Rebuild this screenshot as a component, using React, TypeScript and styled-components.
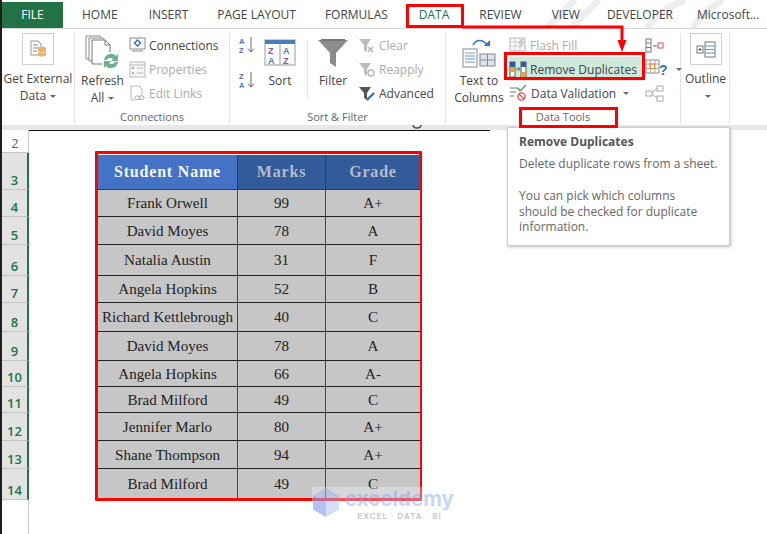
import styled, { createGlobalStyle } from "styled-components";

const GlobalStyle = createGlobalStyle`
  html, body {
    margin: 0;
    padding: 0;
    background: #fff;
  }
  body {
    font-family: "Open Sans", "Noto Sans", sans-serif;
  }
`;

const Page = styled.div`
  position: relative;
  width: 767px;
  height: 534px;
  overflow: hidden;
  background: #fff;
  border-left: 2px solid #1d1d1d;
  box-sizing: border-box;
`;

const TabBar = styled.div`
  position: relative;
  display: flex;
  align-items: flex-end;
  gap: 30px;
  height: 29px;
  box-sizing: border-box;
  border-bottom: 1px solid #d6d6d6;
`;

const FileTab = styled.div`
  width: 61px;
  height: 26px;
  margin-right: -11px;
  background: #217346;
  color: #fff;
  font-size: 12px;
  line-height: 26px;
  text-align: center;
`;

const Tab = styled.div<{ $active?: boolean; $nudge?: number }>`
  position: relative;
  height: 26px;
  margin-left: ${(p) => p.$nudge ?? 0}px;
  font-size: 12px;
  line-height: 26px;
  white-space: nowrap;
  color: ${(p) => (p.$active ? "#217346" : "#444")};
`;

const BackdropArt = styled.svg`
  position: absolute;
  right: 0;
  top: 0;
`;

const Ribbon = styled.div`
  display: flex;
  height: 96px;
  box-sizing: border-box;
  padding: 4px 0 1px;
`;

const Group = styled.div<{ $w: number }>`
  display: flex;
  flex-direction: column;
  width: ${(p) => p.$w}px;
  box-sizing: border-box;
  border-right: 1px solid #e3e3e3;
`;

const GroupBody = styled.div<{ $inset?: number }>`
  flex: 1;
  display: flex;
  min-height: 0;
  padding-left: ${(p) => p.$inset ?? 0}px;
`;

const GroupLabel = styled.div`
  height: 14px;
  font-size: 11px;
  line-height: 14px;
  text-align: center;
  color: #666;
`;

const BigButton = styled.div<{ $w: number }>`
  display: flex;
  flex-direction: column;
  align-items: center;
  flex: none;
  width: ${(p) => p.$w}px;
  font-size: 12px;
  line-height: 17px;
  color: #444;
  text-align: center;
`;

const IconSlot = styled.div`
  display: flex;
  align-items: center;
  justify-content: center;
  height: 39px;
`;

const BoxedIcon = styled.div`
  display: flex;
  align-items: center;
  justify-content: center;
  width: 30px;
  height: 30px;
  margin-bottom: 5px;
  border: 1px solid #cfcfcf;
`;

const Caret = styled.span`
  display: inline-block;
  width: 0;
  height: 0;
  margin-left: 4px;
  vertical-align: 2px;
  border-left: 3px solid transparent;
  border-right: 3px solid transparent;
  border-top: 3px solid #666;
`;

const SmallColumn = styled.div<{ $inset?: number }>`
  display: flex;
  flex-direction: column;
  margin-left: ${(p) => p.$inset ?? 0}px;
`;

const SmallRow = styled.div<{ $muted?: boolean; $hot?: boolean }>`
  display: flex;
  align-items: center;
  gap: 3px;
  height: 24px;
  padding-right: 8px;
  font-size: 12px;
  white-space: nowrap;
  color: ${(p) => (p.$muted ? "#ababab" : "#444")};
  background: ${(p) => (p.$hot ? "#cfe9dc" : "transparent")};
`;

const VerticalRule = styled.div`
  width: 1px;
  height: 58px;
  margin: 7px 9px 0 4px;
  background: #e3e3e3;
`;

const SortColumn = styled.div`
  display: flex;
  flex-direction: column;
  gap: 17px;
  padding: 3px 0 0 9px;
`;

const Band = styled.div`
  height: 5px;
  background: #e8e8e8;
`;

const Sheet = styled.div`
  display: flex;
  height: 404px;
`;

const RowHeaders = styled.div`
  flex: none;
  width: 27px;
  box-sizing: border-box;
  border-right: 1px solid #c8c8c8;
`;

const RowHeader = styled.div<{ $h: number; $plain?: boolean }>`
  display: flex;
  align-items: flex-end;
  justify-content: center;
  height: ${(p) => p.$h}px;
  box-sizing: border-box;
  margin-right: -1px;
  font-size: 13px;
  font-weight: ${(p) => (p.$plain ? 400 : 600)};
  color: ${(p) => (p.$plain ? "#666" : "#217346")};
  background: ${(p) => (p.$plain ? "#fff" : "#e2e2e2")};
  border-bottom: 1px solid #c4c4c4;
  border-right: ${(p) => (p.$plain ? "1px solid #c8c8c8" : "2px solid #217346")};
`;

const Canvas = styled.div`
  flex: 1;
  border-top: 1px solid #111;
  margin-right: 277px;
  padding: 20px 0 0 66px;
`;

const TableFrame = styled.div`
  width: 327px;
  box-sizing: border-box;
  border: 3px solid #f00;
  padding-top: 1px;
  border-radius: 1px;
`;

const Grid = styled.div`
  display: grid;
  grid-template-columns: 140px 88px 94px;
  font-family: "Liberation Serif", serif;
`;

const HeadCell = styled.div<{ $bright?: boolean; $tone: string }>`
  display: flex;
  align-items: center;
  justify-content: center;
  height: 35px;
  box-sizing: border-box;
  font-size: 16px;
  font-weight: 700;
  letter-spacing: 0.8px;
  color: ${(p) => (p.$bright ? "#f4f6fb" : "#b4bccb")};
  background: ${(p) => p.$tone};
  border-right: 1px solid #24406e;
  border-bottom: 1px solid #24406e;
  &:nth-child(3) {
    border-right: 0;
  }
`;

const Cell = styled.div<{ $h: number; $last?: boolean }>`
  display: flex;
  align-items: center;
  justify-content: center;
  height: ${(p) => p.$h}px;
  box-sizing: border-box;
  padding-top: 1px;
  font-size: 15.1px;
  white-space: nowrap;
  color: #222;
  background: #c6c6c6;
  border-bottom: ${(p) => (p.$last ? "0" : "1px solid #222")};
  border-right: 1px solid #444;
  &:nth-child(3n) {
    border-right: 0;
  }
`;

const Tooltip = styled.div`
  position: absolute;
  left: 505px;
  top: 127px;
  width: 223px;
  height: 119px;
  box-sizing: border-box;
  padding: 6px 2px 5px 11px;
  background: #fff;
  border: 1px solid #cdcdcd;
  box-shadow: 1px 1px 3px rgba(0, 0, 0, 0.25);
  font-size: 12px;
  line-height: 15.5px;
  color: #666;
  white-space: nowrap;
`;

const TooltipTitle = styled.div`
  margin-bottom: 6.5px;
  font-weight: 700;
  color: #555;
`;

const TooltipText = styled.div`
  margin-bottom: 16.5px;
`;

const RedBox = styled.div<{ $x: number; $y: number; $w: number; $h: number }>`
  position: absolute;
  left: ${(p) => p.$x}px;
  top: ${(p) => p.$y}px;
  width: ${(p) => p.$w}px;
  height: ${(p) => p.$h}px;
  box-sizing: border-box;
  border: 3px solid #f00;
`;

const Arrow = styled.svg`
  position: absolute;
  left: 460px;
  top: 24px;
`;

const CutOffGlyph = styled.svg`
  position: absolute;
  left: 409px;
  top: 124px;
`;

const Watermark = styled.div`
  position: absolute;
  left: 310px;
  top: 487px;
  display: flex;
  gap: 5px;
  background: rgba(255, 255, 255, 0.3);
`;

const WatermarkWords = styled.div`
  display: flex;
  flex-direction: column;
  align-items: center;
`;

const WatermarkName = styled.div`
  font-family: "Inter", sans-serif;
  font-size: 20.5px;
  font-weight: 700;
  line-height: 24px;
  color: rgba(120, 150, 235, 0.42);
`;

const WatermarkTag = styled.div`
  font-family: "Inter", sans-serif;
  font-size: 8px;
  font-weight: 700;
  letter-spacing: 1px;
  line-height: 11px;
  color: rgba(120, 120, 120, 0.42);
`;

const DocIcon = () => (
  <svg width="18" height="18" viewBox="0 0 18 18">
    <path d="M2 1h7l3 3v11H2z" fill="#fff" stroke="#999" />
    <path d="M4 5h5M4 8h6M4 11h4" stroke="#888" />
    <ellipse cx="13" cy="8" rx="4" ry="1.6" fill="#e9b46a" />
    <path d="M9 8v7c0 2 8 2 8 0V8z" fill="#e9b46a" />
    <path d="M9 11c0 2 8 2 8 0" stroke="#fff" fill="none" strokeWidth=".6" />
  </svg>
);

const RefreshIcon = () => (
  <svg width="36" height="36" viewBox="0 0 36 36">
    <path d="M1 1h14l1 1v22H1z" fill="#fff" stroke="#8a8a8a" />
    <path d="M4 3h14l1 1v22H4z" fill="#fff" stroke="#8a8a8a" />
    <path d="M7 5h13l5 5v19H7z" fill="#fff" stroke="#777" />
    <path d="M20 5v5h5" fill="none" stroke="#777" />
    <circle cx="26" cy="26" r="9" fill="#fff" />
    <path d="M19 25a7 7 0 0 1 12-4l2-2v7h-7l2-2a4 4 0 0 0-6 1z" fill="#6db28c" />
    <path d="M33 27a7 7 0 0 1-12 4l-2 2v-7h7l-2 2a4 4 0 0 0 6-1z" fill="#6db28c" />
  </svg>
);

const ConnectionsIcon = () => (
  <svg width="17" height="16" viewBox="0 0 17 16">
    <rect x="1" y="1" width="15" height="11" fill="#fff" stroke="#888" />
    <path d="M3 14h11" stroke="#888" />
    <path d="M8.5 3l3 3-3 3-3-3z" fill="none" stroke="#2f75b5" strokeWidth="1.4" />
  </svg>
);

const PropertiesIcon = () => (
  <svg width="17" height="17" viewBox="0 0 17 17">
    <rect x="1" y="1" width="15" height="15" fill="#f5f5f5" stroke="#bbb" />
    <path d="M1 4h15" stroke="#bbb" />
    <rect x="3" y="6" width="2" height="2" fill="#aaa" />
    <rect x="3" y="11" width="2" height="2" fill="#aaa" />
    <path d="M8 7h6M8 12h6" stroke="#bbb" />
  </svg>
);

const LinksIcon = () => (
  <svg width="17" height="17" viewBox="0 0 17 17">
    <path d="M2 1h8l3 3v7M2 1v14h4" fill="#fff" stroke="#bbb" />
    <rect x="6" y="11" width="5" height="3.5" rx="1.7" fill="none" stroke="#aaa" />
    <rect x="10" y="11" width="5" height="3.5" rx="1.7" fill="none" stroke="#aaa" />
  </svg>
);

const SortAZ = ({ flip }: { flip?: boolean }) => (
  <svg width="18" height="18" viewBox="0 0 18 18">
    <text x="0" y="8" fontFamily="Liberation Sans" fontSize="7.5" fontWeight="700" fill={flip ? "#7a5ab0" : "#3f80c4"}>
      {flip ? "Z" : "A"}
    </text>
    <text x="0" y="17" fontFamily="Liberation Sans" fontSize="7.5" fontWeight="700" fill={flip ? "#3f80c4" : "#7a5ab0"}>
      {flip ? "A" : "Z"}
    </text>
    <path d="M12 1v15M9 12.5l3 3.5 3-3.5" fill="none" stroke="#666" />
  </svg>
);

const SortIcon = () => (
  <svg width="32" height="27" viewBox="0 0 32 27">
    <rect x="1" y="1" width="30" height="25" fill="#fff" stroke="#999" />
    <rect x="1" y="1" width="30" height="4" fill="#4a7ebb" />
    <path d="M16 5v21" stroke="#999" />
    <text x="4" y="15" fontFamily="Liberation Sans" fontSize="9" fontWeight="700" fill="#7a5ab0">Z</text>
    <text x="4" y="25" fontFamily="Liberation Sans" fontSize="9" fontWeight="700" fill="#3f80c4">A</text>
    <text x="19" y="15" fontFamily="Liberation Sans" fontSize="9" fontWeight="700" fill="#3f80c4">A</text>
    <text x="19" y="25" fontFamily="Liberation Sans" fontSize="9" fontWeight="700" fill="#7a5ab0">Z</text>
  </svg>
);

const FilterIcon = () => (
  <svg width="30" height="28" viewBox="0 0 30 28">
    <path d="M0 1h30L18 14v14l-6-4V14z" fill="#8c8c8c" />
    <path d="M3 1h24" stroke="#777" strokeWidth="2" />
  </svg>
);

const SmallFilter = ({ kind }: { kind: "clear" | "reapply" | "advanced" }) => (
  <svg width="18" height="17" viewBox="0 0 18 17">
    <path
      d="M1 2h12L9 8v7l-3-2V8z"
      fill={kind === "advanced" ? "#555" : "#bdbdbd"}
    />
    {kind === "clear" && <path d="M10 10l5 5M15 10l-5 5" stroke="#b5b5b5" strokeWidth="1.5" />}
    {kind === "reapply" && <circle cx="13" cy="12" r="3" fill="none" stroke="#b5b5b5" strokeWidth="1.4" />}
    {kind === "advanced" && <path d="M9 15l7-7" stroke="#2f75b5" strokeWidth="2.4" />}
  </svg>
);

const TextColumnsIcon = () => (
  <svg width="34" height="30" viewBox="0 0 34 30">
    <rect x="1" y="11" width="14" height="18" fill="#fff" stroke="#888" />
    <path d="M3 15h10M3 18h10M3 21h10M3 24h10" stroke="#5b9bd5" />
    <rect x="18" y="16" width="15" height="12" fill="#dce6f1" stroke="#888" />
    <path d="M25.5 16v12M18 22h15" stroke="#888" />
    <path d="M11 7c3-6 10-6 14 0" fill="none" stroke="#2f75b5" strokeWidth="1.6" />
    <path d="M22 8h6V2z" fill="#2f75b5" />
  </svg>
);

const FlashFillIcon = () => (
  <svg width="18" height="16" viewBox="0 0 18 16">
    <rect x="1" y="1" width="15" height="13" fill="#fafafa" stroke="#bbb" />
    <path d="M1 5h15M1 9h15M6 1v13M11 1v13" stroke="#ccc" />
    <path d="M12 2l-3 5h3l-2 5 6-7h-3l2-3z" fill="#c9c9c9" />
  </svg>
);

const DuplicatesIcon = () => (
  <svg width="18" height="17" viewBox="0 0 18 17">
    <rect x="1" y="1" width="5" height="15" fill="#fff" stroke="#5a5a5a" />
    <rect x="1" y="1" width="5" height="5" fill="#2f5d9b" />
    <rect x="1" y="6" width="5" height="5" fill="#e6a23c" />
    <rect x="12" y="1" width="5" height="15" fill="#fff" stroke="#5a5a5a" />
    <rect x="12" y="1" width="5" height="5" fill="#2f5d9b" />
    <rect x="12" y="11" width="5" height="5" fill="#e6a23c" />
    <path d="M7 8h3M9 6l2 2-2 2" fill="none" stroke="#2f75b5" />
  </svg>
);

const ValidationIcon = () => (
  <svg width="19" height="18" viewBox="0 0 19 18">
    <path d="M1 4h8M1 8h6M1 12h4" stroke="#777" />
    <path d="M9 4l2 3 6-6" fill="none" stroke="#4c9a6a" strokeWidth="1.4" />
    <circle cx="12.5" cy="12.5" r="3.6" fill="#fff" stroke="#d9534f" strokeWidth="1.4" />
    <path d="M10 10l5 5" stroke="#d9534f" strokeWidth="1.3" />
  </svg>
);

const ConsolidateIcon = () => (
  <svg width="20" height="15" viewBox="0 0 20 15">
    <rect x="1" y="1" width="5" height="13" fill="#fff" stroke="#777" />
    <path d="M1 5h5M1 9.500h5" stroke="#777" />
    <path d="M8 8h4" stroke="#2f75b5" />
    <rect x="13" y="5" width="5" height="5" fill="#fff" stroke="#d9534f" />
  </svg>
);

const WhatIfIcon = () => (
  <svg width="24" height="21" viewBox="0 0 24 21">
    <rect x="1" y="1" width="13" height="13" fill="#fff" stroke="#888" />
    <path d="M1 5h13M1 9.500h13M5.500 1v13M10 1v13" stroke="#aaa" />
    <rect x="5" y="5" width="4.500" height="4.500" fill="none" stroke="#e08a2e" />
    <text x="14" y="16" fontFamily="Liberation Sans" fontSize="14" fontWeight="700" fill="#2f75b5">?</text>
  </svg>
);

const RelationshipIcon = () => (
  <svg width="20" height="17" viewBox="0 0 20 17">
    <rect x="1" y="6" width="6" height="5" fill="#fff" stroke="#aaa" />
    <rect x="12" y="1" width="6" height="5" fill="#fff" stroke="#aaa" />
    <rect x="12" y="11" width="6" height="5" fill="#fff" stroke="#aaa" />
    <path d="M7 8l5-5M7 9l5 4" stroke="#aaa" />
  </svg>
);

const OutlineIcon = () => (
  <svg width="20" height="17" viewBox="0 0 20 17">
    <rect x="1" y="5" width="6" height="7" fill="#fff" stroke="#777" />
    <path d="M2.500 8.500h3M4 7v3" stroke="#555" />
    <rect x="9" y="1" width="10" height="15" fill="#fff" stroke="#777" />
    <path d="M9 5h10M9 8.500h10M9 12h10" stroke="#5b9bd5" />
  </svg>
);

const TABS = [
  { label: "HOME" },
  { label: "INSERT", nudge: 1 },
  { label: "PAGE LAYOUT", nudge: -1 },
  { label: "FORMULAS", nudge: -1 },
  { label: "DATA", nudge: 1 },
  { label: "REVIEW" },
  { label: "VIEW" },
  { label: "DEVELOPER", nudge: -3 },
  { label: "Microsoft...", nudge: -6 },
];

const ROW_HEADS = [
  { n: 2, h: 23 },
  { n: 3, h: 37 },
  { n: 4, h: 27 },
  { n: 5, h: 28 },
  { n: 6, h: 31 },
  { n: 7, h: 27 },
  { n: 8, h: 29 },
  { n: 9, h: 29 },
  { n: 10, h: 26 },
  { n: 11, h: 26 },
  { n: 12, h: 28 },
  { n: 13, h: 28 },
  { n: 14, h: 31 },
];

const STUDENTS = [
  { name: "Frank Orwell", marks: 99, grade: "A+", h: 27 },
  { name: "David Moyes", marks: 78, grade: "A", h: 28 },
  { name: "Natalia Austin", marks: 31, grade: "F", h: 31 },
  { name: "Angela Hopkins", marks: 52, grade: "B", h: 27 },
  { name: "Richard Kettlebrough", marks: 40, grade: "C", h: 29 },
  { name: "David Moyes", marks: 78, grade: "A", h: 29 },
  { name: "Angela Hopkins", marks: 66, grade: "A-", h: 26 },
  { name: "Brad Milford", marks: 49, grade: "C", h: 26 },
  { name: "Jennifer Marlo", marks: 80, grade: "A+", h: 28 },
  { name: "Shane Thompson", marks: 94, grade: "A+", h: 28 },
  { name: "Brad Milford", marks: 49, grade: "C", h: 29 },
];

function App() {
  return (
    <Page>
      <GlobalStyle />
      <TabBar>
        <BackdropArt width="270" height="28" viewBox="0 0 270 28">
          <path d="M50 28L78 0M74 28L102 0M150 28c8-12 22-22 38-28M196 28c6-10 16-20 30-28" fill="none" stroke="#eee" strokeWidth="7" />
        </BackdropArt>
        <FileTab>FILE</FileTab>
        {TABS.map((t) => (
          <Tab key={t.label} $active={t.label === "DATA"} $nudge={t.nudge}>
            {t.label}
          </Tab>
        ))}
      </TabBar>

      <Ribbon>
        <Group $w={73}>
          <GroupBody>
            <BigButton $w={72}>
              <BoxedIcon>
                <DocIcon />
              </BoxedIcon>
              Get External
              <span>
                Data
                <Caret />
              </span>
            </BigButton>
          </GroupBody>
        </Group>

        <Group $w={155}>
          <GroupBody $inset={1}>
            <BigButton $w={53}>
              <IconSlot>
                <RefreshIcon />
              </IconSlot>
              Refresh
              <span>
                All
                <Caret />
              </span>
            </BigButton>
            <SmallColumn>
              <SmallRow>
                <ConnectionsIcon />
                Connections
              </SmallRow>
              <SmallRow $muted>
                <PropertiesIcon />
                Properties
              </SmallRow>
              <SmallRow $muted>
                <LinksIcon />
                Edit Links
              </SmallRow>
            </SmallColumn>
          </GroupBody>
          <GroupLabel>Connections</GroupLabel>
        </Group>

        <Group $w={216}>
          <GroupBody>
            <SortColumn>
              <SortAZ />
              <SortAZ flip />
            </SortColumn>
            <BigButton $w={46}>
              <IconSlot>
                <SortIcon />
              </IconSlot>
              Sort
            </BigButton>
            <VerticalRule />
            <BigButton $w={32}>
              <IconSlot>
                <FilterIcon />
              </IconSlot>
              Filter
            </BigButton>
            <SmallColumn $inset={9}>
              <SmallRow $muted>
                <SmallFilter kind="clear" />
                Clear
              </SmallRow>
              <SmallRow $muted>
                <SmallFilter kind="reapply" />
                Reapply
              </SmallRow>
              <SmallRow>
                <SmallFilter kind="advanced" />
                Advanced
              </SmallRow>
            </SmallColumn>
          </GroupBody>
          <GroupLabel>Sort &amp; Filter</GroupLabel>
        </Group>

        <Group $w={235}>
          <GroupBody $inset={3}>
            <BigButton $w={60}>
              <IconSlot>
                <TextColumnsIcon />
              </IconSlot>
              Text to
              <span>Columns</span>
            </BigButton>
            <SmallColumn>
              <SmallRow $muted>
                <FlashFillIcon />
                Flash Fill
              </SmallRow>
              <SmallRow $hot>
                <DuplicatesIcon />
                Remove Duplicates
              </SmallRow>
              <SmallRow>
                <ValidationIcon />
                Data Validation
                <Caret />
              </SmallRow>
            </SmallColumn>
            <SmallColumn>
              <SmallRow>
                <ConsolidateIcon />
              </SmallRow>
              <SmallRow>
                <WhatIfIcon />
                <Caret />
              </SmallRow>
              <SmallRow>
                <RelationshipIcon />
              </SmallRow>
            </SmallColumn>
          </GroupBody>
          <GroupLabel>Data Tools</GroupLabel>
        </Group>

        <Group $w={49}>
          <GroupBody $inset={1}>
            <BigButton $w={47}>
              <BoxedIcon>
                <OutlineIcon />
              </BoxedIcon>
              Outline
              <span>
                <Caret />
              </span>
            </BigButton>
          </GroupBody>
        </Group>
      </Ribbon>

      <Band />

      <Sheet>
        <RowHeaders>
          {ROW_HEADS.map((r) => (
            <RowHeader key={r.n} $h={r.h} $plain={r.n === 2}>
              {r.n}
            </RowHeader>
          ))}
        </RowHeaders>
        <Canvas>
          <TableFrame>
            <Grid>
              <HeadCell $bright $tone="#4472c4">Student Name</HeadCell>
              <HeadCell $tone="#335a9a">Marks</HeadCell>
              <HeadCell $tone="#335a9a">Grade</HeadCell>
              {STUDENTS.flatMap((s, i) => {
                const last = i === STUDENTS.length - 1;
                return [
                  <Cell key={`${i}n`} $h={s.h} $last={last}>{s.name}</Cell>,
                  <Cell key={`${i}m`} $h={s.h} $last={last}>{s.marks}</Cell>,
                  <Cell key={`${i}g`} $h={s.h} $last={last}>{s.grade}</Cell>,
                ];
              })}
            </Grid>
          </TableFrame>
        </Canvas>
      </Sheet>

      <CutOffGlyph width="12" height="6" viewBox="0 0 12 6">
        <path d="M2 1c0 4 8 4 8 0" fill="none" stroke="#444" strokeWidth="1.3" />
      </CutOffGlyph>

      <Tooltip>
        <TooltipTitle>Remove Duplicates</TooltipTitle>
        <TooltipText>Delete duplicate rows from a sheet.</TooltipText>
        You can pick which columns
        <br />
        should be checked for duplicate
        <br />
        information.
      </Tooltip>

      <RedBox $x={404} $y={4} $w={58} $h={24} />
      <RedBox $x={502} $y={52} $w={141} $h={28} />
      <RedBox $x={517} $y={107} $w={99} $h={21} />
      <Arrow width="170" height="30" viewBox="0 0 170 30">
        <path d="M0 3h160v15" fill="none" stroke="#f00" strokeWidth="3" />
        <path d="M155.500 16h9L160 28z" fill="#f00" />
      </Arrow>

      <Watermark>
        <svg width="28" height="31" viewBox="0 0 28 31">
          <path d="M14 1l13 7.500v14L14 30 1 22.500v-14z" fill="rgba(120,150,235,.3)" />
          <path d="M14 15L1 8.500v14L14 30z" fill="rgba(100,130,220,.3)" />
        </svg>
        <WatermarkWords>
          <WatermarkName>exceldemy</WatermarkName>
          <WatermarkTag>EXCEL · DATA · BI</WatermarkTag>
        </WatermarkWords>
      </Watermark>
    </Page>
  );
}

export default App;
